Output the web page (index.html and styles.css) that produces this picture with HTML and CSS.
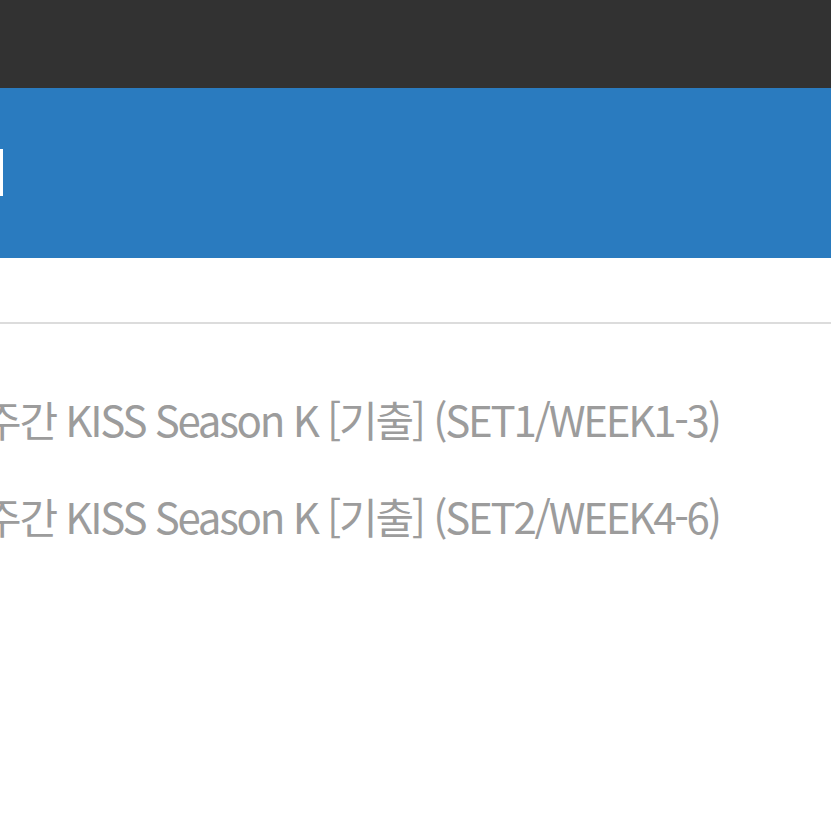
FILE: index.html
```html
<!DOCTYPE html>
<html lang="ko">
<head>
    <meta charset="UTF-8">
    <meta name="viewport" content="width=device-width, initial-scale=1.0">
    <title>주간 KISS Season K</title>
    <link rel="stylesheet" href="styles.css">
</head>
<body>
    <div class="topbar"></div>
    <div class="header">
        <span class="header-title"></span>
    </div>
    <div class="tabs"></div>
    <ul class="list">
        <li>주간 KISS Season K [기출] (SET1/WEEK1-3)</li>
        <li>주간 KISS Season K [기출] (SET2/WEEK4-6)</li>
    </ul>
</body>
</html>
```

FILE: styles.css
```css
* {
    margin: 0;
    padding: 0;
    box-sizing: border-box;
    font-family: 'Noto Sans CJK KR', 'Noto Sans', sans-serif;
}
body {
    background: #fff;
    overflow: hidden;
}
.topbar {
    height: 88px;
    background: #323232;
}
.header {
    height: 170px;
    background: #2a7bbf;
    display: flex;
    align-items: center;
}
.header-title {
    display: block;
    width: 3px;
    height: 47px;
    background: #fff;
    margin-top: -2px;
}
.tabs {
    height: 66px;
    border-bottom: 2px solid #dcdcdc;
}
.list {
    list-style: none;
    padding-top: 46px;
}
.list li {
    font-size: 42px;
    line-height: 97px;
    color: #9c9c9c;
    letter-spacing: -2.25px;
    white-space: nowrap;
    margin-left: -17px;
}
```
